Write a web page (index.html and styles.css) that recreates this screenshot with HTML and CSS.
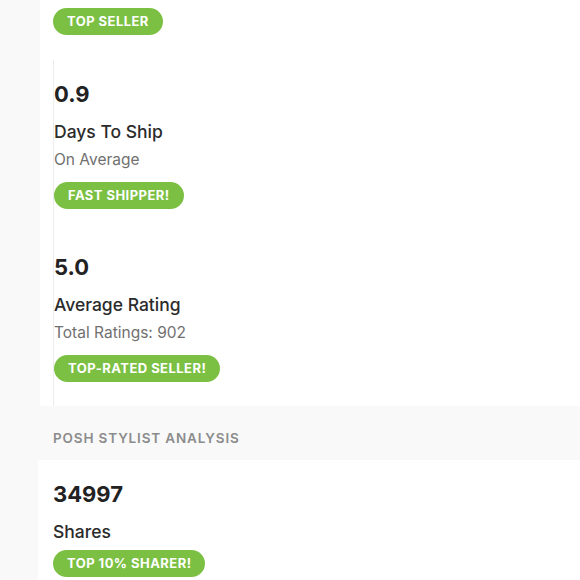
FILE: index.html
```html
<!DOCTYPE html>
<html>
<head>
<meta charset="utf-8">
<link rel="stylesheet" href="styles.css">
</head>
<body>
<div class="page">
  <section class="card card-top">
    <div class="top-badge"><span class="badge">TOP SELLER</span></div>
    <div class="stat bordered">
      <div class="value">0.9</div>
      <div class="title">Days To Ship</div>
      <div class="sub">On Average</div>
      <span class="badge">FAST SHIPPER!</span>
    </div>
    <div class="stat bordered">
      <div class="value">5.0</div>
      <div class="title">Average Rating</div>
      <div class="sub">Total Ratings: 902</div>
      <span class="badge">TOP-RATED SELLER!</span>
    </div>
  </section>
  <h2 class="section-head">POSH STYLIST ANALYSIS</h2>
  <section class="card card-bottom">
    <div class="stat">
      <div class="value">34997</div>
      <div class="title">Shares</div>
      <span class="badge">TOP 10% SHARER!</span>
    </div>
  </section>
</div>
</body>
</html>
```
FILE: styles.css
```css
html, body {
  margin: 0;
  padding: 0;
  background: #f9f9f9;
  font-family: Inter, Lato, sans-serif;
  color: #2b2b2b;
  overflow: hidden;
}
.page {
  width: 580px;
  height: 580px;
  overflow: hidden;
}
.card {
  background: #ffffff;
}
.card-top {
  margin-left: 40px;
  padding-left: 13px;
  padding-top: 8px;
}
.top-badge {
  height: 52px;
}
.stat {
  display: flex;
  flex-direction: column;
  align-items: flex-start;
}
.stat.bordered {
  border-left: 1px solid #ececec;
  padding-top: 21px;
  padding-bottom: 24px;
}
.value {
  font-size: 22px;
  font-weight: 700;
  line-height: 26px;
  color: #222;
}
.title {
  font-size: 17.5px;
  font-weight: 500;
  line-height: 24px;
  margin-top: 13px;
  color: #2b2b2b;
}
.sub {
  font-size: 15.5px;
  line-height: 22px;
  margin-top: 5px;
  color: #707070;
}
.badge {
  display: inline-block;
  background: #7bc043;
  color: #ffffff;
  font-size: 13px;
  font-weight: 700;
  letter-spacing: 0.45px;
  line-height: 27px;
  height: 27px;
  padding: 0 14px;
  border-radius: 14px;
  margin-top: 11px;
}
.top-badge .badge {
  margin-top: 0;
}
.section-head {
  margin: 0;
  padding: 22px 0 0 53px;
  height: 32px;
  font-size: 13.5px;
  font-weight: 600;
  letter-spacing: 0.85px;
  color: #8c8c8c;
  line-height: 20px;
}
.card-bottom {
  margin-left: 38px;
  padding-left: 15px;
  padding-top: 21px;
  height: 200px;
}
.card-bottom .badge {
  margin-top: 6px;
}
```
